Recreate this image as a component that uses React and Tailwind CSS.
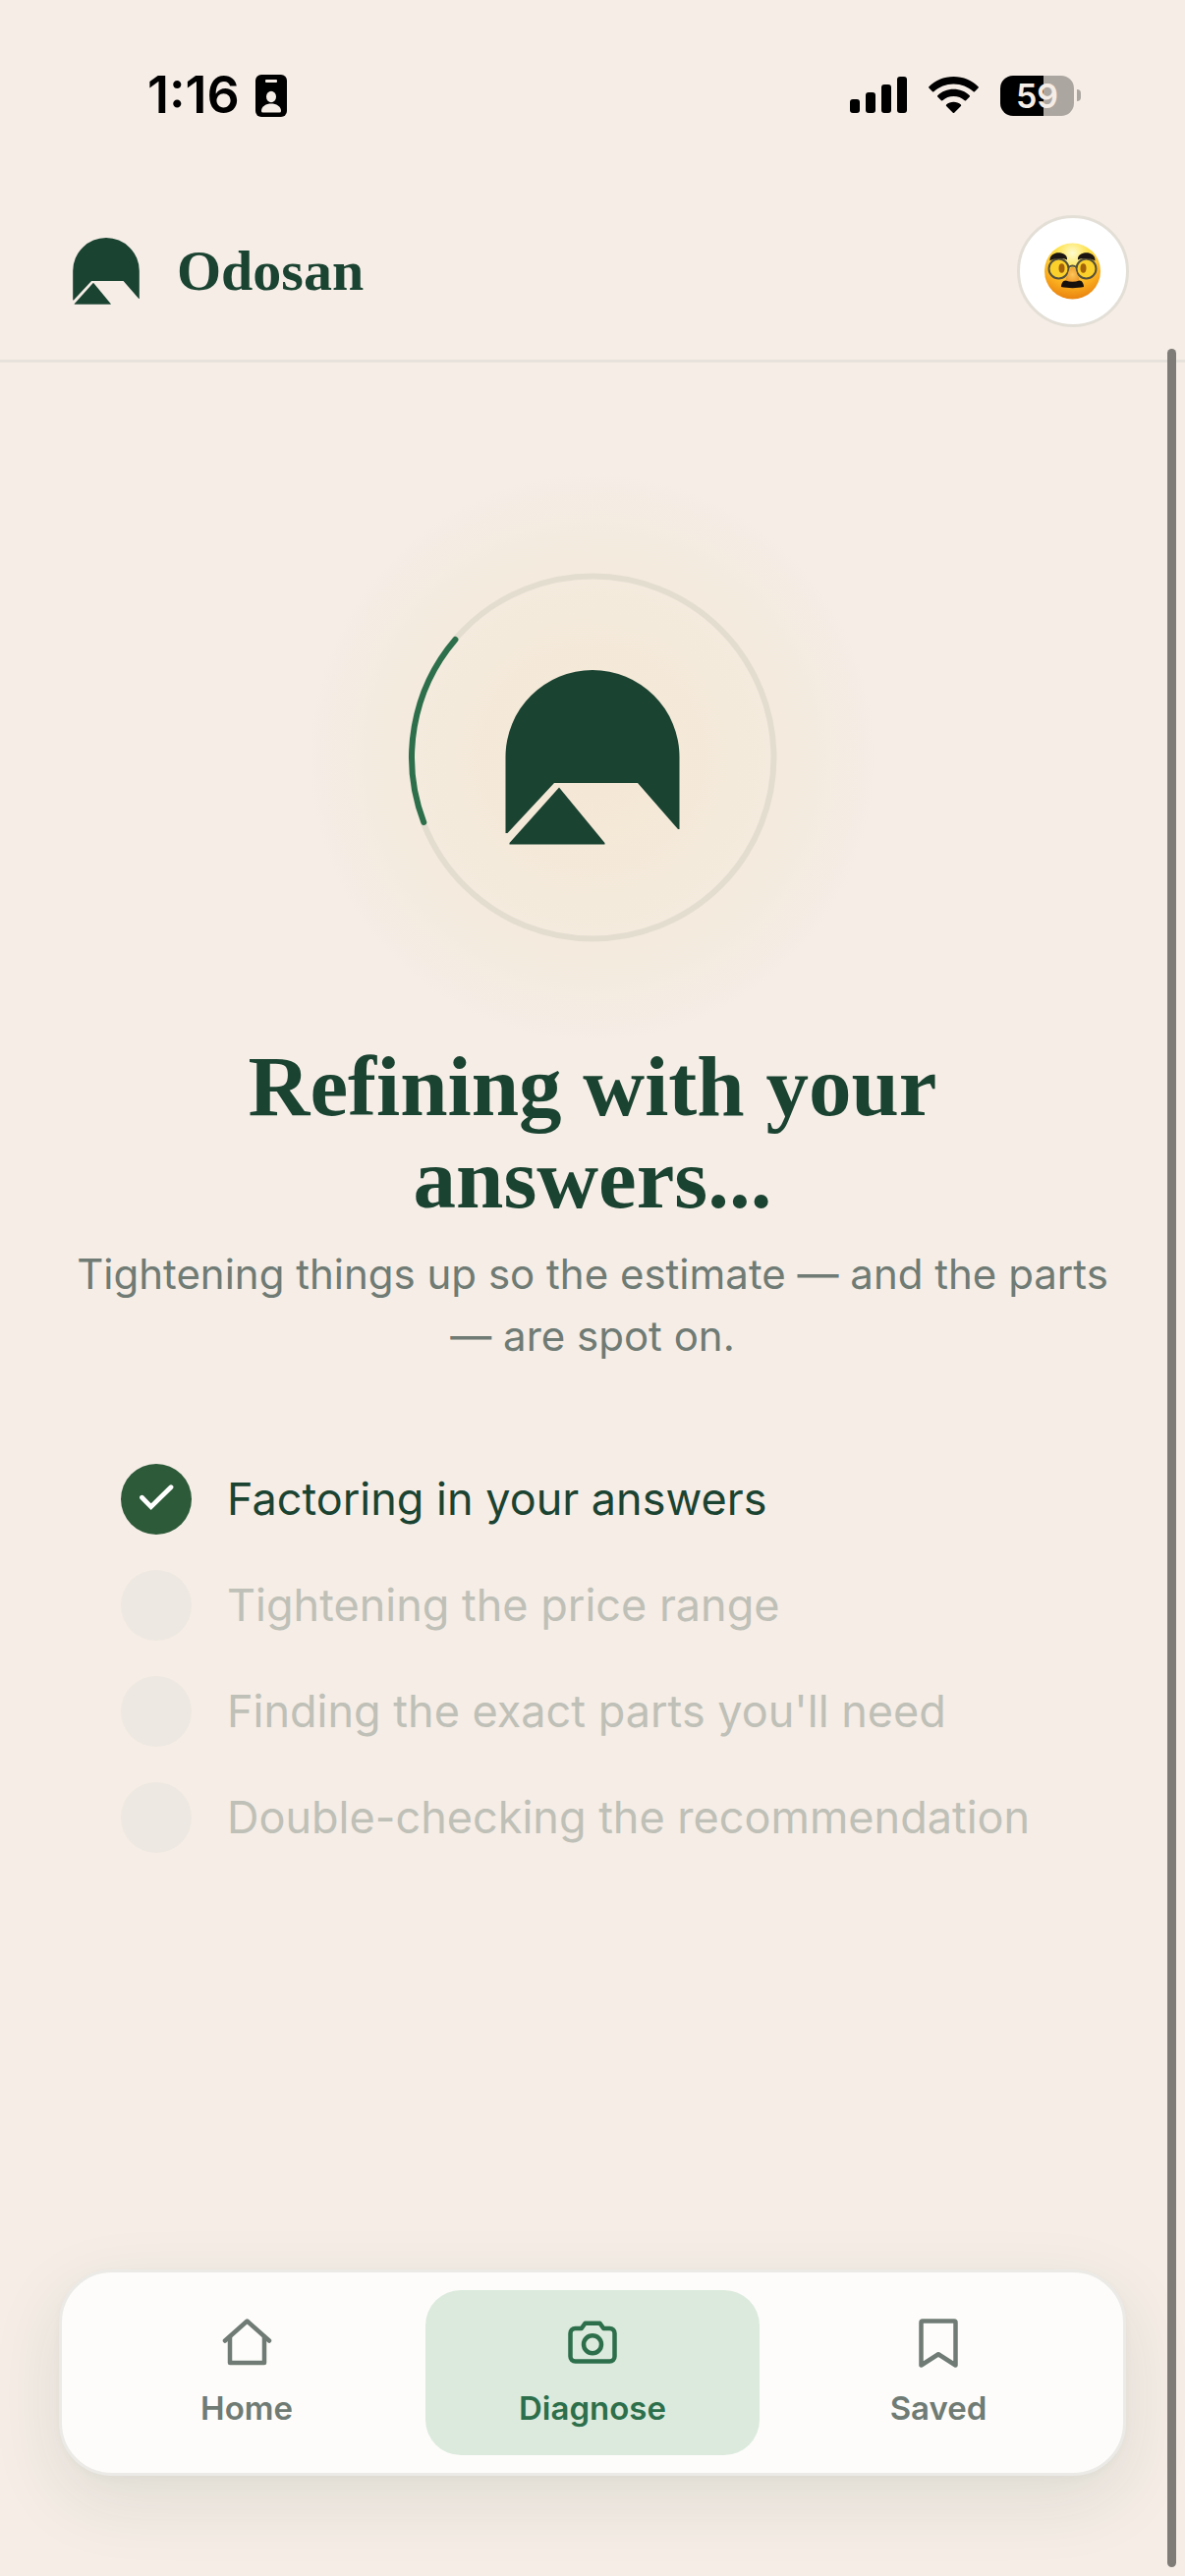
import React, { useState } from "react";

const steps = [
  { id: 1, label: "Factoring in your answers", done: true },
  { id: 2, label: "Tightening the price range", done: false },
  { id: 3, label: "Finding the exact parts you'll need", done: false },
  { id: 4, label: "Double-checking the recommendation", done: false },
];

const LogoMark = ({ className }) => (
  <svg viewBox="0 0 177 178" className={className} fill="#1b4332" aria-hidden="true">
    <path d="M0 88.5a88.5 88.5 0 0 1 177 0V162h-1.500L134.500 115h-85L2 166H0Z" />
    <path d="M54.500 119.500 101 176v1.500H4V176Z" />
  </svg>
);

const StatusBar = () => (
  <div className="flex items-center justify-between pt-16 pr-[106px] pl-[150px]">
    <div className="flex items-center gap-4 text-black">
      <span className="text-[52px] leading-[66px] font-semibold">1:16</span>
      <svg viewBox="0 0 32 43" className="h-[43px] w-8" aria-hidden="true">
        <rect width="32" height="43" rx="6" fill="#000" />
        <rect x="10" y="5" width="12" height="3" rx="1" fill="#f5ede6" />
        <ellipse cx="16" cy="22.500" rx="5" ry="5.800" fill="#f5ede6" />
        <path d="M6 37c0-5 5-7.500 10-7.500S26 32 26 37q0 1.500-1.500 1.500h-17Q6 38.500 6 37Z" fill="#f5ede6" />
      </svg>
    </div>

    <div className="flex items-center gap-[22px]">
      <svg viewBox="0 0 58 38" className="h-[38px] w-[58px]" aria-hidden="true">
        <rect x="0" y="23" width="10" height="14" rx="3" />
        <rect x="16" y="16" width="10" height="21" rx="3" />
        <rect x="32" y="8" width="10" height="29" rx="3" />
        <rect x="48" y="0" width="10" height="37" rx="3" />
      </svg>

      <svg viewBox="0 0 51 38" className="h-[38px] w-[51px]" aria-hidden="true">
        <path d="M25.500 0C35.500 0 44.500 4 50.600 10.200q.6.700 0 1.400l-3.600 3.700q-.7.600-1.400 0C40.200 10.200 33.200 7.400 25.500 7.400S10.800 10.200 5.400 15.300q-.7.600-1.400 0L.4 11.600q-.6-.7 0-1.400C6.500 4 15.500 0 25.500 0Z" />
        <path d="M25.500 12.800c6.300 0 12 2.400 16.300 6.400q.7.700 0 1.400l-3.700 3.700q-.7.600-1.400 0c-3-2.700-6.900-4.200-11.200-4.200s-8.200 1.500-11.200 4.200q-.7.600-1.400 0l-3.700-3.700q-.7-.7 0-1.400c4.300-4 10-6.400 16.300-6.400Z" />
        <path d="M25.500 25.800c2.800 0 5.400 1 7.400 2.700q.7.700 0 1.400l-6.700 6.800q-.7.600-1.400 0l-6.700-6.800q-.7-.7 0-1.400c2-1.700 4.600-2.700 7.400-2.700Z" />
      </svg>

      <div className="flex items-center gap-[3px]">
        <div className="flex h-[41px] w-[75px] items-center justify-center rounded-[13px] bg-linear-to-r from-black from-59% to-[#aca6a1] to-59% text-[34px] leading-[41px] font-semibold text-[#f5ede6]">
          59
        </div>
        <div className="h-3 w-1 rounded-r-full bg-[#aca6a1]" />
      </div>
    </div>
  </div>
);

// Glasses-and-moustache face used as the profile picture
const DisguisedFace = () => (
  <svg viewBox="0 0 58 58" className="size-[58px]" aria-hidden="true">
    <defs>
      <radialGradient id="face" cx="50%" cy="18%" r="82%">
        <stop offset="0" stopColor="#fffbd0" />
        <stop offset="0.35" stopColor="#fde24a" />
        <stop offset="0.7" stopColor="#fbb01f" />
        <stop offset="1" stopColor="#e98310" />
      </radialGradient>
      <radialGradient id="nose" cx="50%" cy="50%" r="55%">
        <stop offset="0" stopColor="#fcc65a" />
        <stop offset="1" stopColor="#ee9a2a" />
      </radialGradient>
    </defs>
    <circle cx="28.500" cy="29" r="28.500" fill="url(#face)" />
    <circle cx="14.500" cy="26.500" r="10" fill="#fbd02a" stroke="#54503d" strokeWidth="2" />
    <circle cx="42.500" cy="26.500" r="10" fill="#fbd02a" stroke="#54503d" strokeWidth="2" />
    <ellipse cx="17.500" cy="26" rx="3" ry="4.800" fill="#a4620a" />
    <ellipse cx="39.500" cy="26" rx="3" ry="4.800" fill="#a4620a" />
    <path d="M28.500 25c3 0 4 4 5 8 2 2 3 7-1 7h-8c-4 0-3-5-1-7 1-4 2-8 5-8Z" fill="url(#nose)" />
    <path d="M24.500 25q4-3 8 0" fill="none" stroke="#54503d" strokeWidth="2" />
    <path d="M5.500 18.500C5 12 11.500 9.500 17 10.500c4 .8 6.500 3.500 6 7-5-2-11.500-2-17.500 1ZM51.500 18.500c.5-6.500-6-9-11.500-8-4 .8-6.500 3.500-6 7 5-2 11.500-2 17.500 1Z" fill="#1c1612" />
    <path d="M21.500 38.500q7 2.500 14 0c3 0 4.500 3.500 4.500 6.500-7 1.500-16 1.500-23 0 0-3 1.500-6.500 4.500-6.500Z" fill="#17110d" />
  </svg>
);

const Header = () => (
  <header className="flex items-center justify-between border-b-[3px] border-[#e7e3dc] pt-[89px] pr-[57px] pb-[33px] pl-[74px]">
    <a href="#home" className="flex items-center gap-[38px]">
      <LogoMark className="size-[68px]" />
      <span className="font-['Liberation_Serif',serif] text-[58px] leading-[68px] font-bold">
        Odosan
      </span>
    </a>
    <button
      type="button"
      aria-label="Profile"
      className="flex size-[114px] items-center justify-center rounded-full border-[3px] border-[#e3dfd7] bg-white"
    >
      <DisguisedFace />
    </button>
  </header>
);

const Spinner = () => (
  <div className="flex size-[576px] items-center justify-center rounded-full bg-[radial-gradient(closest-side,#f5e6d3_0%,#f4eadb_50%,#f4ebe0_80%,#f5ede6_100%)]">
    <div className="grid place-items-center">
      <svg viewBox="0 0 384 384" className="col-start-1 row-start-1 size-96" fill="none" aria-hidden="true">
        <circle cx="192" cy="192" r="184.500" stroke="#e3ddd0" strokeWidth="6" />
        <path d="M20.300 258A184.500 184.500 0 0 1 52.400 72" stroke="#2d6f4b" strokeWidth="6" strokeLinecap="round" />
      </svg>
      <LogoMark className="col-start-1 row-start-1 size-[178px]" />
    </div>
  </div>
);

const CheckMark = () => (
  <svg viewBox="0 0 42 42" className="size-[42px]" fill="none" stroke="#fff" strokeWidth="4.8" strokeLinecap="round" strokeLinejoin="miter" aria-hidden="true">
    <path d="m6.500 19.300 9.200 9.300L36 8.700" />
  </svg>
);

const StepList = () => (
  <ul className="flex w-full flex-col gap-9 px-[63px]">
    {steps.map((step) => (
      <li key={step.id} className="flex items-center gap-9">
        <span
          className={
            step.done
              ? "flex size-[72px] shrink-0 items-center justify-center rounded-full bg-[#2d5a39]"
              : "size-[72px] shrink-0 rounded-full bg-[#ede8e1]"
          }
        >
          {step.done && <CheckMark />}
        </span>
        <span
          className={
            step.done
              ? "text-[45px] leading-[68px]"
              : "text-[45px] leading-[68px] text-[#bfc0b7]"
          }
        >
          {step.label}
        </span>
      </li>
    ))}
  </ul>
);

const icons = {
  home: (
    <>
      <path d="M3.200 11 12.200 3l9 8" />
      <path d="M5.200 9.500V20h14V9.500" />
    </>
  ),
  camera: (
    <>
      <path d="M5 6h2.500L9 3.900h6L16.500 6H19A2 2 0 0 1 21 8v9.400a2 2 0 0 1-2 2H5a2 2 0 0 1-2-2V8a2 2 0 0 1 2-2Z" />
      <circle cx="12" cy="12.500" r="3.600" />
    </>
  ),
  bookmark: <path d="M5.600 3h12.800q.6 0 .6.600V21l-7-4.500L5 21V3.600q0-.6.600-.6Z" />,
};

const tabs = [
  { id: "home", label: "Home", icon: "home" },
  { id: "diagnose", label: "Diagnose", icon: "camera" },
  { id: "saved", label: "Saved", icon: "bookmark" },
];

const TabBar = () => {
  const [active, setActive] = useState("diagnose");

  return (
    <nav className="mx-[60px] mb-[102px] grid grid-cols-3 gap-3 rounded-[54px] border-[3px] border-[#ebeae6] bg-[#fdfcfa] p-[18px] shadow-[0_24px_72px_rgba(27,67,50,0.1),0_3px_9px_rgba(27,67,50,0.03)]">
      {tabs.map((tab) => (
        <button
          key={tab.id}
          type="button"
          onClick={() => setActive(tab.id)}
          className={
            active === tab.id
              ? "flex h-[168px] flex-col items-center gap-3 rounded-[36px] bg-[#dceadd] pt-6 text-[#2d6f4b]"
              : "flex h-[168px] flex-col items-center gap-3 rounded-[36px] pt-6 text-[#6f7b74]"
          }
        >
          <svg
            viewBox="0 0 24 24"
            className="size-[60px]"
            fill="none"
            stroke="currentColor"
            strokeWidth="1.8"
            strokeLinecap="round"
            strokeLinejoin="round"
            aria-hidden="true"
          >
            {icons[tab.icon]}
          </svg>
          <span className="text-[33px] leading-[48px] font-semibold">{tab.label}</span>
        </button>
      ))}
    </nav>
  );
};

const App = () => {
  return (
    <div className="relative flex min-h-screen flex-col bg-[#f5ede6] font-['Inter',sans-serif] text-[#1b4332]">
      <StatusBar />
      <Header />

      <main className="flex grow flex-col items-center px-[60px] pt-[114px]">
        <Spinner />
        <h1 className="text-center font-['Liberation_Serif',serif] text-[87px] leading-[94px] font-bold">
          Refining with your
          <br />
          answers...
        </h1>
        <p className="mt-[18px] mb-[99px] text-center text-[42px] leading-[63px] text-[#6f7b74]">
          Tightening things up so the estimate — and the parts — are spot on.
        </p>
        <StepList />
      </main>

      <TabBar />

      {/* scroll indicator */}
      <div className="absolute top-[355px] right-[9px] bottom-[9px] w-[9px] rounded-full bg-[#7f7c77]" />
    </div>
  );
};

export default App;
